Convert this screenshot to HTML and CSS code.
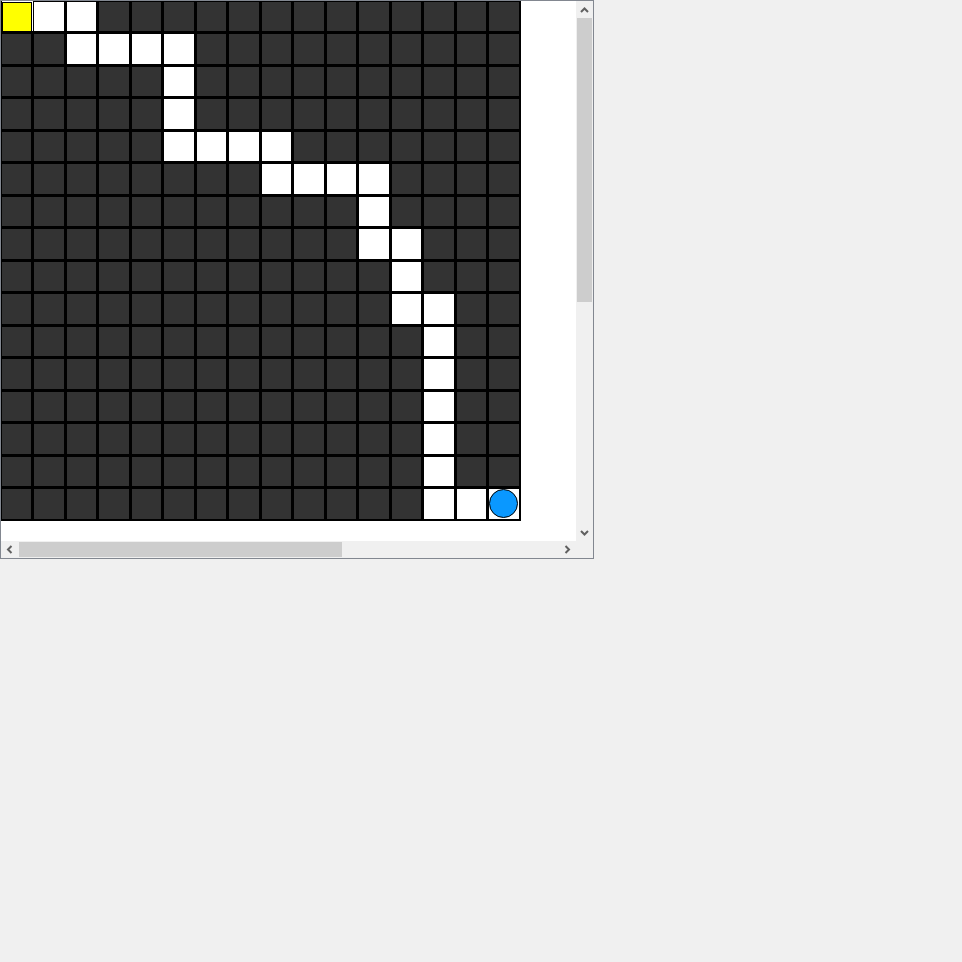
FILE: index.html
```html
<!DOCTYPE html>
<html>
<head>
<meta charset="utf-8">
<title>Maze</title>
<link rel="stylesheet" href="styles.css">
</head>
<body>
<div class="frame">
  <div class="viewport">
    <div class="grid">
      <i class="w start"><b class="player"></b></i><i class="w"></i><i class="w"></i><i></i><i></i><i></i><i></i><i></i><i></i><i></i><i></i><i></i><i></i><i></i><i></i><i></i>
      <i></i><i></i><i class="w"></i><i class="w"></i><i class="w"></i><i class="w"></i><i></i><i></i><i></i><i></i><i></i><i></i><i></i><i></i><i></i><i></i>
      <i></i><i></i><i></i><i></i><i></i><i class="w"></i><i></i><i></i><i></i><i></i><i></i><i></i><i></i><i></i><i></i><i></i>
      <i></i><i></i><i></i><i></i><i></i><i class="w"></i><i></i><i></i><i></i><i></i><i></i><i></i><i></i><i></i><i></i><i></i>
      <i></i><i></i><i></i><i></i><i></i><i class="w"></i><i class="w"></i><i class="w"></i><i class="w"></i><i></i><i></i><i></i><i></i><i></i><i></i><i></i>
      <i></i><i></i><i></i><i></i><i></i><i></i><i></i><i></i><i class="w"></i><i class="w"></i><i class="w"></i><i class="w"></i><i></i><i></i><i></i><i></i>
      <i></i><i></i><i></i><i></i><i></i><i></i><i></i><i></i><i></i><i></i><i></i><i class="w"></i><i></i><i></i><i></i><i></i>
      <i></i><i></i><i></i><i></i><i></i><i></i><i></i><i></i><i></i><i></i><i></i><i class="w"></i><i class="w"></i><i></i><i></i><i></i>
      <i></i><i></i><i></i><i></i><i></i><i></i><i></i><i></i><i></i><i></i><i></i><i></i><i class="w"></i><i></i><i></i><i></i>
      <i></i><i></i><i></i><i></i><i></i><i></i><i></i><i></i><i></i><i></i><i></i><i></i><i class="w"></i><i class="w"></i><i></i><i></i>
      <i></i><i></i><i></i><i></i><i></i><i></i><i></i><i></i><i></i><i></i><i></i><i></i><i></i><i class="w"></i><i></i><i></i>
      <i></i><i></i><i></i><i></i><i></i><i></i><i></i><i></i><i></i><i></i><i></i><i></i><i></i><i class="w"></i><i></i><i></i>
      <i></i><i></i><i></i><i></i><i></i><i></i><i></i><i></i><i></i><i></i><i></i><i></i><i></i><i class="w"></i><i></i><i></i>
      <i></i><i></i><i></i><i></i><i></i><i></i><i></i><i></i><i></i><i></i><i></i><i></i><i></i><i class="w"></i><i></i><i></i>
      <i></i><i></i><i></i><i></i><i></i><i></i><i></i><i></i><i></i><i></i><i></i><i></i><i></i><i class="w"></i><i></i><i></i>
      <i></i><i></i><i></i><i></i><i></i><i></i><i></i><i></i><i></i><i></i><i></i><i></i><i></i><i class="w"></i><i class="w"></i><i class="w goal"><b class="ball"></b></i>
    </div>
  </div>
  <div class="vbar">
    <div class="btn"><svg width="17" height="17" viewBox="0 0 17 17"><path d="M5 11 L8.5 7.5 L12 11" fill="none" stroke="#606060" stroke-width="2"/></svg></div>
    <div class="track"><div class="vthumb"></div></div>
    <div class="btn"><svg width="17" height="17" viewBox="0 0 17 17"><path d="M5 7 L8.5 10.5 L12 7" fill="none" stroke="#606060" stroke-width="2"/></svg></div>
  </div>
  <div class="hbar">
    <div class="btn"><svg width="17" height="17" viewBox="0 0 17 17"><path d="M10.5 5 L7 8.5 L10.5 12" fill="none" stroke="#606060" stroke-width="2"/></svg></div>
    <div class="track"><div class="hthumb"></div></div>
    <div class="btn"><svg width="17" height="17" viewBox="0 0 17 17"><path d="M6.5 5 L10 8.5 L6.5 12" fill="none" stroke="#606060" stroke-width="2"/></svg></div>
  </div>
  <div class="corner"></div>
</div>
</body>
</html>
```

FILE: styles.css
```css
html, body {
  margin: 0;
  padding: 0;
  background: #f0f0f0;
  width: 962px;
  height: 962px;
  overflow: hidden;
  font-family: "Liberation Sans", Arial, sans-serif;
}

.frame {
  display: grid;
  grid-template-columns: 575px 17px;
  grid-template-rows: 540px 17px;
  width: 592px;
  height: 557px;
  border: 1px solid #828790;
}

.viewport {
  background: #ffffff;
  overflow: hidden;
}

.grid {
  display: grid;
  grid-template-columns: repeat(8, 29px 30px);
  grid-template-rows: repeat(8, 29px 30px);
  gap: 3px;
  padding: 1px 2px 2px 1px;
  width: 520px;
  height: 520px;
  box-sizing: border-box;
  background: #000000;
}

.grid i {
  display: block;
  background: #333333;
}

.grid i.w {
  background: #ffffff;
}

.grid i.start {
  margin: -1px -2px 0 0;
  padding-top: 1px;
}

.player {
  display: block;
  box-sizing: border-box;
  width: 30px;
  height: 30px;
  border: 1px solid #000000;
  background: #ffff00;
}

.goal {
  display: flex;
  align-items: center;
  justify-content: center;
}

.ball {
  display: block;
  box-sizing: border-box;
  flex: 0 0 29px;
  width: 29px;
  height: 29px;
  border: 1px solid #000000;
  border-radius: 50%;
  background: #0a98ff;
}

.vbar {
  display: flex;
  flex-direction: column;
  background: #f0f0f0;
}

.hbar {
  display: flex;
  flex-direction: row;
  background: #f0f0f0;
}

.btn {
  width: 17px;
  height: 17px;
  flex: 0 0 17px;
}

.btn svg {
  display: block;
}

.track {
  flex: 1 1 auto;
  display: flex;
}

.vbar .track {
  flex-direction: column;
}

.vthumb {
  width: 15px;
  height: 284px;
  margin-left: 1px;
  background: #cdcdcd;
}

.hthumb {
  width: 323px;
  height: 15px;
  margin-top: 1px;
  margin-left: 1px;
  background: #cdcdcd;
}

.corner {
  background: #f0f0f0;
}
```
